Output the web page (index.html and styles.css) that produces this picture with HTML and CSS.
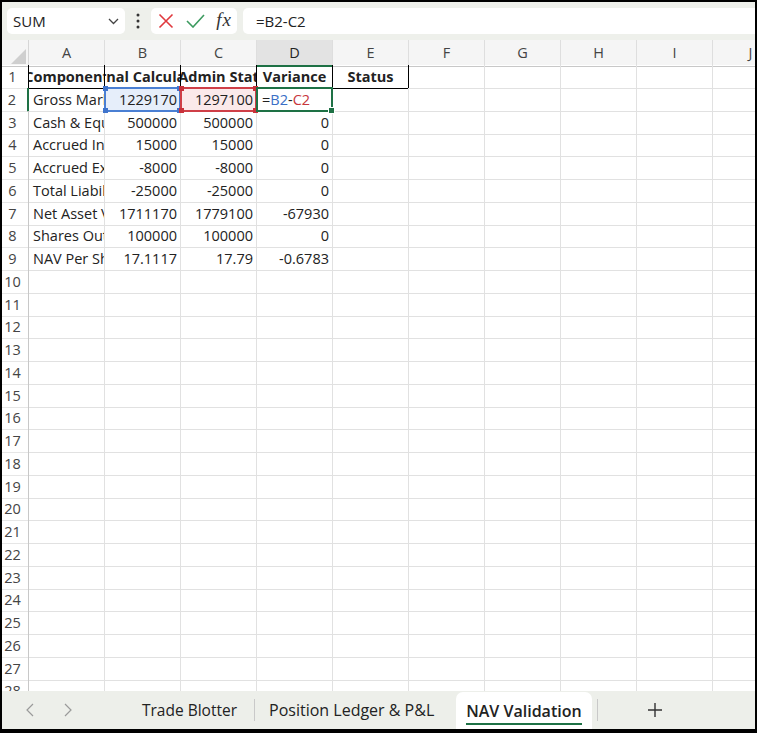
FILE: index.html
```html
<!DOCTYPE html>
<html lang="en">
<head>
    <meta charset="UTF-8">
    <title>NAV Validation</title>
    <link rel="stylesheet" href="styles.css">
</head>
<body>
<div class="app">
    <div class="fbar">
        <div class="namebox">
            <span>SUM</span>
            <svg width="11" height="7" viewBox="0 0 11 7"><path d="M1 1 L5.5 5.5 L10 1" fill="none" stroke="#444" stroke-width="1.3"/></svg>
        </div>
        <div class="grip">
            <svg width="4" height="16" viewBox="0 0 4 16"><circle cx="2" cy="2" r="1.5" fill="#333"/><circle cx="2" cy="8" r="1.5" fill="#333"/><circle cx="2" cy="14" r="1.5" fill="#333"/></svg>
        </div>
        <div class="fxbox">
            <svg width="16" height="16" viewBox="0 0 16 16"><path d="M1.5 1.5 L14.5 14.5 M14.5 1.5 L1.5 14.5" stroke="#e0393e" stroke-width="1.6" fill="none"/></svg>
            <svg width="19" height="14" viewBox="0 0 19 14"><path d="M1 7 L7 13 L18 1" stroke="#3c9a5f" stroke-width="1.6" fill="none"/></svg>
            <span class="fx"><i>f</i><i>x</i></span>
        </div>
        <div class="finput">=B2-C2</div>
    </div>

    <div class="sheet">
        <div class="row head">
            <div class="corner"><svg width="15" height="15" viewBox="0 0 15 15"><path d="M15 0 L15 15 L0 15 Z" fill="#cfcfcf"/></svg></div>
            <div class="ch">A</div><div class="ch">B</div><div class="ch">C</div><div class="ch on">D</div><div class="ch">E</div>
            <div class="ch">F</div><div class="ch">G</div><div class="ch">H</div><div class="ch">I</div><div class="ch">J</div>
        </div>
        <div class="row r1">
            <div class="rh">1</div>
            <div class="c hd"><span>Component</span></div>
            <div class="c hd"><span>Internal Calculation</span></div>
            <div class="c hd"><span>Admin Stat</span></div>
            <div class="c hd"><span>Variance</span></div>
            <div class="c hd"><span>Status</span></div>
            <div class="c"></div><div class="c"></div><div class="c"></div><div class="c"></div><div class="c"></div>
        </div>
        <div class="row">
            <div class="rh on">2</div>
            <div class="c">Gross Market Value</div>
            <div class="c num ref-b">1229170<span class="box blue"><i class="k tl"></i><i class="k tr"></i><i class="k bl"></i><i class="k br"></i></span></div>
            <div class="c num ref-r">1297100<span class="box red"><i class="k tl"></i><i class="k tr"></i><i class="k bl"></i><i class="k br"></i></span></div>
            <div class="c act">=<span class="t-b">B2</span>-<span class="t-r">C2</span><span class="box green"><i class="k br"></i></span></div>
            <div class="c"></div><div class="c"></div><div class="c"></div><div class="c"></div><div class="c"></div><div class="c"></div>
        </div>
        <div class="row">
            <div class="rh">3</div>
            <div class="c">Cash &amp; Equivalents</div><div class="c num">500000</div><div class="c num">500000</div><div class="c num">0</div>
            <div class="c"></div><div class="c"></div><div class="c"></div><div class="c"></div><div class="c"></div><div class="c"></div>
        </div>
        <div class="row">
            <div class="rh">4</div>
            <div class="c">Accrued Income</div><div class="c num">15000</div><div class="c num">15000</div><div class="c num">0</div>
            <div class="c"></div><div class="c"></div><div class="c"></div><div class="c"></div><div class="c"></div><div class="c"></div>
        </div>
        <div class="row">
            <div class="rh">5</div>
            <div class="c">Accrued Expenses</div><div class="c num">-8000</div><div class="c num">-8000</div><div class="c num">0</div>
            <div class="c"></div><div class="c"></div><div class="c"></div><div class="c"></div><div class="c"></div><div class="c"></div>
        </div>
        <div class="row">
            <div class="rh">6</div>
            <div class="c">Total Liabilities</div><div class="c num">-25000</div><div class="c num">-25000</div><div class="c num">0</div>
            <div class="c"></div><div class="c"></div><div class="c"></div><div class="c"></div><div class="c"></div><div class="c"></div>
        </div>
        <div class="row">
            <div class="rh">7</div>
            <div class="c">Net Asset Value</div><div class="c num">1711170</div><div class="c num">1779100</div><div class="c num">-67930</div>
            <div class="c"></div><div class="c"></div><div class="c"></div><div class="c"></div><div class="c"></div><div class="c"></div>
        </div>
        <div class="row">
            <div class="rh">8</div>
            <div class="c">Shares Outstanding</div><div class="c num">100000</div><div class="c num">100000</div><div class="c num">0</div>
            <div class="c"></div><div class="c"></div><div class="c"></div><div class="c"></div><div class="c"></div><div class="c"></div>
        </div>
        <div class="row">
            <div class="rh">9</div>
            <div class="c">NAV Per Share</div><div class="c num">17.1117</div><div class="c num">17.79</div><div class="c num">-0.6783</div>
            <div class="c"></div><div class="c"></div><div class="c"></div><div class="c"></div><div class="c"></div><div class="c"></div>
        </div>
        <div class="row"><div class="rh">10</div><div class="c"></div><div class="c"></div><div class="c"></div><div class="c"></div><div class="c"></div><div class="c"></div><div class="c"></div><div class="c"></div><div class="c"></div><div class="c"></div></div>
        <div class="row"><div class="rh">11</div><div class="c"></div><div class="c"></div><div class="c"></div><div class="c"></div><div class="c"></div><div class="c"></div><div class="c"></div><div class="c"></div><div class="c"></div><div class="c"></div></div>
        <div class="row"><div class="rh">12</div><div class="c"></div><div class="c"></div><div class="c"></div><div class="c"></div><div class="c"></div><div class="c"></div><div class="c"></div><div class="c"></div><div class="c"></div><div class="c"></div></div>
        <div class="row"><div class="rh">13</div><div class="c"></div><div class="c"></div><div class="c"></div><div class="c"></div><div class="c"></div><div class="c"></div><div class="c"></div><div class="c"></div><div class="c"></div><div class="c"></div></div>
        <div class="row"><div class="rh">14</div><div class="c"></div><div class="c"></div><div class="c"></div><div class="c"></div><div class="c"></div><div class="c"></div><div class="c"></div><div class="c"></div><div class="c"></div><div class="c"></div></div>
        <div class="row"><div class="rh">15</div><div class="c"></div><div class="c"></div><div class="c"></div><div class="c"></div><div class="c"></div><div class="c"></div><div class="c"></div><div class="c"></div><div class="c"></div><div class="c"></div></div>
        <div class="row"><div class="rh">16</div><div class="c"></div><div class="c"></div><div class="c"></div><div class="c"></div><div class="c"></div><div class="c"></div><div class="c"></div><div class="c"></div><div class="c"></div><div class="c"></div></div>
        <div class="row"><div class="rh">17</div><div class="c"></div><div class="c"></div><div class="c"></div><div class="c"></div><div class="c"></div><div class="c"></div><div class="c"></div><div class="c"></div><div class="c"></div><div class="c"></div></div>
        <div class="row"><div class="rh">18</div><div class="c"></div><div class="c"></div><div class="c"></div><div class="c"></div><div class="c"></div><div class="c"></div><div class="c"></div><div class="c"></div><div class="c"></div><div class="c"></div></div>
        <div class="row"><div class="rh">19</div><div class="c"></div><div class="c"></div><div class="c"></div><div class="c"></div><div class="c"></div><div class="c"></div><div class="c"></div><div class="c"></div><div class="c"></div><div class="c"></div></div>
        <div class="row"><div class="rh">20</div><div class="c"></div><div class="c"></div><div class="c"></div><div class="c"></div><div class="c"></div><div class="c"></div><div class="c"></div><div class="c"></div><div class="c"></div><div class="c"></div></div>
        <div class="row"><div class="rh">21</div><div class="c"></div><div class="c"></div><div class="c"></div><div class="c"></div><div class="c"></div><div class="c"></div><div class="c"></div><div class="c"></div><div class="c"></div><div class="c"></div></div>
        <div class="row"><div class="rh">22</div><div class="c"></div><div class="c"></div><div class="c"></div><div class="c"></div><div class="c"></div><div class="c"></div><div class="c"></div><div class="c"></div><div class="c"></div><div class="c"></div></div>
        <div class="row"><div class="rh">23</div><div class="c"></div><div class="c"></div><div class="c"></div><div class="c"></div><div class="c"></div><div class="c"></div><div class="c"></div><div class="c"></div><div class="c"></div><div class="c"></div></div>
        <div class="row"><div class="rh">24</div><div class="c"></div><div class="c"></div><div class="c"></div><div class="c"></div><div class="c"></div><div class="c"></div><div class="c"></div><div class="c"></div><div class="c"></div><div class="c"></div></div>
        <div class="row"><div class="rh">25</div><div class="c"></div><div class="c"></div><div class="c"></div><div class="c"></div><div class="c"></div><div class="c"></div><div class="c"></div><div class="c"></div><div class="c"></div><div class="c"></div></div>
        <div class="row"><div class="rh">26</div><div class="c"></div><div class="c"></div><div class="c"></div><div class="c"></div><div class="c"></div><div class="c"></div><div class="c"></div><div class="c"></div><div class="c"></div><div class="c"></div></div>
        <div class="row"><div class="rh">27</div><div class="c"></div><div class="c"></div><div class="c"></div><div class="c"></div><div class="c"></div><div class="c"></div><div class="c"></div><div class="c"></div><div class="c"></div><div class="c"></div></div>
        <div class="row"><div class="rh">28</div><div class="c"></div><div class="c"></div><div class="c"></div><div class="c"></div><div class="c"></div><div class="c"></div><div class="c"></div><div class="c"></div><div class="c"></div><div class="c"></div></div>
    </div>

    <div class="tabs">
        <div class="tab-nav">
            <svg width="8" height="14" viewBox="0 0 8 14"><path d="M7 1 L1 7 L7 13" fill="none" stroke="#9a9a9a" stroke-width="1.2"/></svg>
            <svg width="8" height="14" viewBox="0 0 8 14"><path d="M1 1 L7 7 L1 13" fill="none" stroke="#9a9a9a" stroke-width="1.2"/></svg>
        </div>
        <div class="tab first">Trade Blotter</div>
        <div class="sep"></div>
        <div class="tab ledger">Position Ledger &amp; P&amp;L</div>
        <div class="tab active"><span>NAV Validation</span></div>
        <div class="sep"></div>
        <div class="tab-add">
            <svg width="16" height="16" viewBox="0 0 16 16"><path d="M8 1 V15 M1 8 H15" stroke="#333" stroke-width="1.4"/></svg>
        </div>
    </div>
</div>
</body>
</html>
```

FILE: styles.css
```css
* {
    box-sizing: border-box;
}
body {
    margin: 0;
    background: #000;
    font-family: "Open Sans", "Liberation Sans", sans-serif;
    color: #222;
}
.app {
    margin: 2px 2px 4px 2px;
    width: 753px;
    height: 727px;
    background: #fff;
    overflow: hidden;
    display: flex;
    flex-direction: column;
}

/* formula bar */
.fbar {
    height: 38px;
    flex: none;
    display: flex;
    align-items: center;
    padding-left: 5px;
    background: #eef0eb;
    font-size: 15px;
}
.namebox {
    width: 118px;
    height: 26px;
    background: #fff;
    border-radius: 5px;
    display: flex;
    align-items: center;
    justify-content: space-between;
    padding: 0 6px 0 6px;
}
.grip {
    width: 26px;
    display: flex;
    justify-content: center;
}
.fxbox {
    width: 86px;
    height: 26px;
    background: #fff;
    border-radius: 5px;
    display: flex;
    align-items: center;
    justify-content: space-between;
    padding: 0 6px 0 7px;
}
.fx {
    font-family: "Liberation Serif", serif;
    font-size: 19px;
    color: #333;
    line-height: 1;
    margin-top: -3px;
}
.fx i + i {
    margin-left: 1px;
}
.finput {
    flex: 1;
    margin-left: 6px;
    height: 26px;
    line-height: 26px;
    background: #fff;
    border-radius: 5px 0 0 5px;
    padding-left: 13px;
}

/* grid */
.sheet {
    flex: 1;
    overflow: hidden;
    font-size: 14.5px;
}
.row {
    display: grid;
    grid-template-columns: 27px repeat(10, 76px);
    height: 22.75px;
}
.row.head {
    height: 25px;
    background: #f5f5f5;
}
.corner {
    display: flex;
    align-items: flex-end;
    justify-content: flex-end;
    padding: 0 2px 2px 0;
    border-right: 1px solid #d6d6d6;
    border-bottom: 1px solid #c8c8c8;
}
.ch {
    text-align: center;
    line-height: 25px;
    color: #444;
    border-right: 1px solid #dedede;
    border-bottom: 1px solid #c8c8c8;
}
.ch.on {
    background: #e3e3e3;
    border-bottom: 2px solid #1e7145;
    color: #222;
}
.rh {
    text-align: center;
    padding-right: 5px;
    color: #444;
    line-height: 23px;
    border-right: 1px solid #c8c8c8;
    border-bottom: 1px solid #e6e6e6;
}
.rh.on {
    border-right: 2px solid #1e7145;
}
.c {
    position: relative;
    padding: 0 3px 0 4px;
    line-height: 23px;
    white-space: nowrap;
    overflow: hidden;
    border-right: 1px solid #e1e1e1;
    border-bottom: 1px solid #e1e1e1;
}
.num {
    text-align: right;
}
.r1 .rh {
    border-right-color: #000;
}
.hd {
    display: flex;
    justify-content: center;
    font-weight: 700;
    padding: 0;
    border-right-color: #000;
    border-bottom-color: #000;
}

/* formula references */
.ref-b, .ref-r, .act {
    overflow: visible;
}
.ref-b {
    background: #e6eefa;
}
.ref-r {
    background: #fbe9ea;
}
.box {
    position: absolute;
    top: -1px;
    left: -1px;
    right: -1px;
    bottom: -1px;
    border: 2px solid;
    z-index: 2;
}
.box.blue {
    border-color: #4a7fd3;
}
.box.red {
    border-color: #cf3f47;
}
.box.green {
    border-color: #1e7145;
    z-index: 3;
}
.k {
    position: absolute;
    width: 5px;
    height: 5px;
}
.blue .k {
    background: #3f74cc;
}
.red .k {
    background: #c9323b;
    z-index: 1;
}
.green .k {
    background: #1e7145;
    outline: 1px solid #fff;
}
.k.tl { top: -3px; left: -3px; }
.k.tr { top: -3px; right: -3px; }
.k.bl { bottom: -3px; left: -3px; }
.k.br { bottom: -3px; right: -3px; }
.act {
    padding-left: 5px;
}
.t-b {
    color: #3a6fc6;
}
.t-r {
    color: #c8363c;
}

/* sheet tabs */
.tabs {
    height: 38px;
    flex: none;
    display: flex;
    align-items: center;
    background: #edefea;
    font-size: 15.5px;
    color: #222;
}
.tab-nav {
    width: 123px;
    display: flex;
    gap: 30px;
    padding-left: 24px;
}
.tab {
    line-height: 38px;
}
.tab.first {
    padding: 0 17px 0 17px;
}
.tab.ledger {
    padding: 0 0 0 14px;
    font-size: 16px;
}
.sep {
    width: 1px;
    height: 22px;
    background: #c9c9c9;
}
.tab.active {
    align-self: stretch;
    margin: 1px 5px 0 22px;
    padding: 0 10px;
    background: #fff;
    border-radius: 7px 7px 0 0;
    font-weight: 600;
    font-size: 16px;
    display: flex;
    align-items: center;
}
.tab.active span {
    line-height: 24px;
    border-bottom: 2px solid #1e7145;
    margin-top: 2px;
}
.tab-add {
    width: 114px;
    display: flex;
    justify-content: center;
}
```
